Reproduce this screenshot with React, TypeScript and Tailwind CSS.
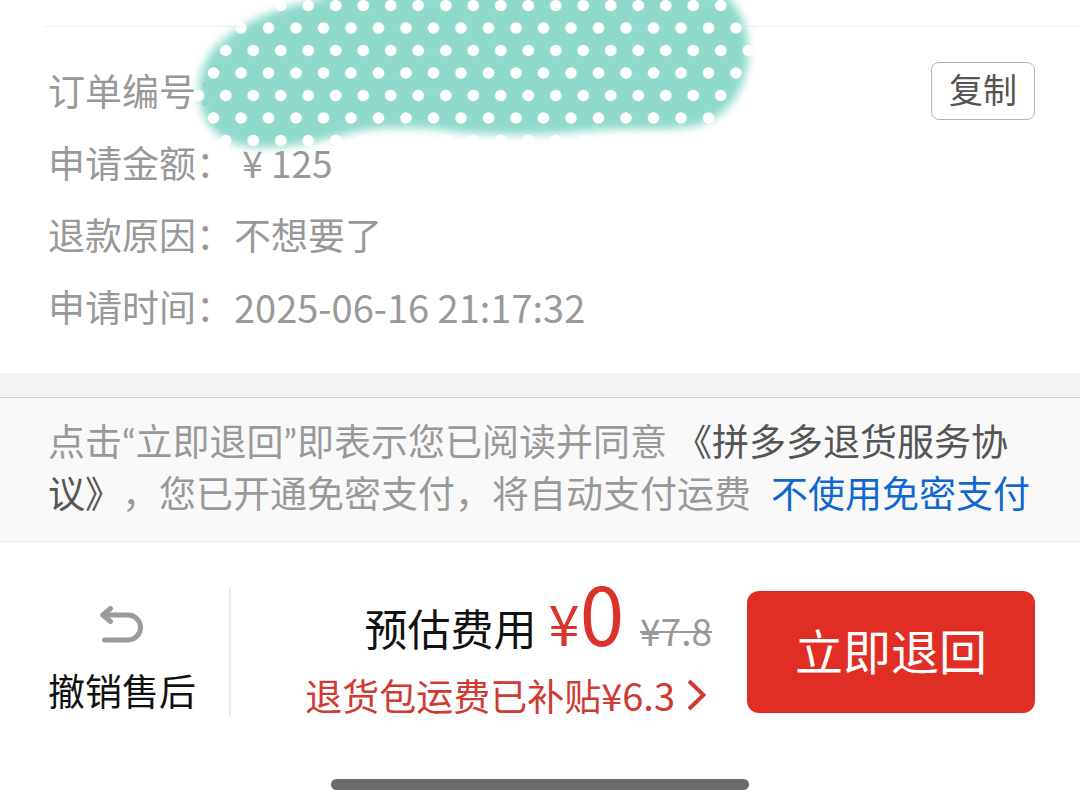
import type { ReactNode } from 'react';

interface DetailRowProps {
  label: string;
  children?: ReactNode;
  action?: ReactNode;
}

function DetailRow({ label, children, action }: DetailRowProps) {
  return (
    <div className="flex h-[72px] items-center text-[37px] text-[#999999]">
      <dt className="w-[186px] shrink-0 whitespace-nowrap">{label}</dt>
      <dd className="flex flex-1 items-center justify-between">
        <span>{children}</span>
        {action}
      </dd>
    </div>
  );
}

// Dotted brush stroke that hides the order number
function BrushCover() {
  return (
    <svg
      className="pointer-events-none absolute top-0 left-[180px]"
      width="590"
      height="170"
      viewBox="180 0 590 170"
      aria-hidden="true"
    >
      <defs>
        <filter id="soften" x="-10%" y="-20%" width="120%" height="140%">
          <feGaussianBlur stdDeviation="4" />
        </filter>
        <pattern id="dots" x="212" y="-17" width="27.5" height="45" patternUnits="userSpaceOnUse">
          <circle cx="13.75" cy="22.5" r="5.8" fill="#fff" />
          <circle cx="1.5" cy="0" r="5.8" fill="#fff" />
          <circle cx="1.5" cy="45" r="5.8" fill="#fff" />
          <circle cx="29" cy="0" r="5.8" fill="#fff" />
          <circle cx="29" cy="45" r="5.8" fill="#fff" />
        </pattern>
        <mask id="brush" maskUnits="userSpaceOnUse" x="180" y="-20" width="590" height="200">
          <path
            d="M325 -2 C285 4 240 22 217 45 C202 62 199 78 199 92 C200 118 212 136 236 144 C262 152 300 146 335 137 C370 127 400 126 440 130 C480 136 540 136 590 131 C630 127 670 132 700 125 C730 115 745 88 748 62 C750 35 744 8 722 -8 L325 -14 Z"
            fill="#fff"
            filter="url(#soften)"
          />
        </mask>
      </defs>
      <g mask="url(#brush)">
        <rect x="180" y="0" width="590" height="170" fill="#90dacc" />
        <rect x="180" y="0" width="590" height="170" fill="url(#dots)" />
      </g>
    </svg>
  );
}

function UndoIcon() {
  return (
    <svg width="44" height="38" viewBox="0 0 44 38" fill="none" stroke="#9b9b9b" strokeWidth="5" strokeLinecap="round" strokeLinejoin="round" aria-hidden="true">
      <path d="M10.5 2.5 2.8 9l7.7 6.5" />
      <path d="M3 9h25a12.5 12.5 0 0 1 0 25H4.5" />
    </svg>
  );
}

function OrderDetails() {
  return (
    <section className="relative pt-[26px]">
      <div className="ml-[45px] h-px bg-[#efefef]" />
      <dl className="pt-7 pr-[45px] pb-[30px] pl-12">
        <DetailRow
          label="订单编号："
          action={
            <button
              type="button"
              className="h-[58px] w-[104px] rounded-lg border border-[#b4b4b4] pb-1 text-[34px] leading-none text-[#555555]"
            >
              复制
            </button>
          }
        />
        <DetailRow label="申请金额：">
          <span className="flex items-baseline">
            <span className="w-[37px] text-center text-[37px]">¥</span>
            <span className="text-[37px]">125</span>
          </span>
        </DetailRow>
        <DetailRow label="退款原因：">不想要了</DetailRow>
        <DetailRow label="申请时间：">
          <time dateTime="2025-06-16T21:17:32" className="text-[38px]">
            2025-06-16 21:17:32
          </time>
        </DetailRow>
      </dl>
      <BrushCover />
    </section>
  );
}

function Agreement() {
  return (
    <p className="border-t border-b border-t-[#d0d0d0] border-b-[#ebebeb] bg-[#f9f9f9] pt-[18px] pr-[45px] pb-[21px] pl-12 font-['Lato','Noto_Sans_CJK_SC',sans-serif] text-[37px] leading-[52px] text-[#999999] [text-spacing-trim:space-all]">
      点击“立即退回”即表示您已阅读并同意
      <a href="#agreement" className="ml-2 text-[#555555]">《拼多多退货服务协议》</a>
      ，您已开通免密支付，将自动支付运费
      <a href="#payment" className="ml-5 text-[#1068cf]">不使用免密支付</a>
    </p>
  );
}

function ActionBar() {
  return (
    <footer className="pt-[45px]">
      <div className="flex items-start pr-[45px]">
        <button type="button" className="flex h-[129px] w-[231px] flex-col items-start border-r-2 border-[#ebebeb] pt-[19px] pl-12 text-[37px] text-[#111111]">
          <span className="flex flex-col items-center gap-[18px]">
            <UndoIcon />
            <span className="leading-[56px]">撤销售后</span>
          </span>
        </button>
        <div className="flex flex-1 flex-col items-end pr-[35px]">
          <div className="flex h-[72px] items-baseline leading-[48px]">
            <span className="text-[43px] text-[#111111]">预估费用</span>
            <span className="ml-3 text-[56px] text-[#d9332a]">¥</span>
            <span className="text-[80px] text-[#d9332a]">0</span>
            <s className="ml-4 text-[37px] text-[#999999] decoration-2">¥7.8</s>
          </div>
          <button type="button" className="mt-2 flex items-center text-[37px] leading-[56px] text-[#cf3a33]">
            退货包运费已补贴<span className="text-[38px]">¥6.3</span>
            <svg className="mr-1.5 ml-3" width="19" height="32" viewBox="0 0 19 32" fill="none" stroke="currentColor" strokeWidth="4" aria-hidden="true">
              <path d="M2 2 16.5 16 2 30" />
            </svg>
          </button>
        </div>
        <button type="button" className="mt-1 h-[122px] w-[288px] shrink-0 rounded-xl bg-[#e02e24] pb-1.5 text-[48px] text-white">
          立即退回
        </button>
      </div>
      <div className="mx-auto mt-14 mb-4 h-[11px] w-[418px] rounded-full bg-[#6a6a6a]" />
    </footer>
  );
}

export default function App() {
  return (
    <main className="overflow-hidden bg-white font-['Noto_Sans_CJK_SC',sans-serif]" lang="zh-CN">
      <OrderDetails />
      <div className="h-6 bg-[#f4f4f4]" />
      <Agreement />
      <ActionBar />
    </main>
  );
}
